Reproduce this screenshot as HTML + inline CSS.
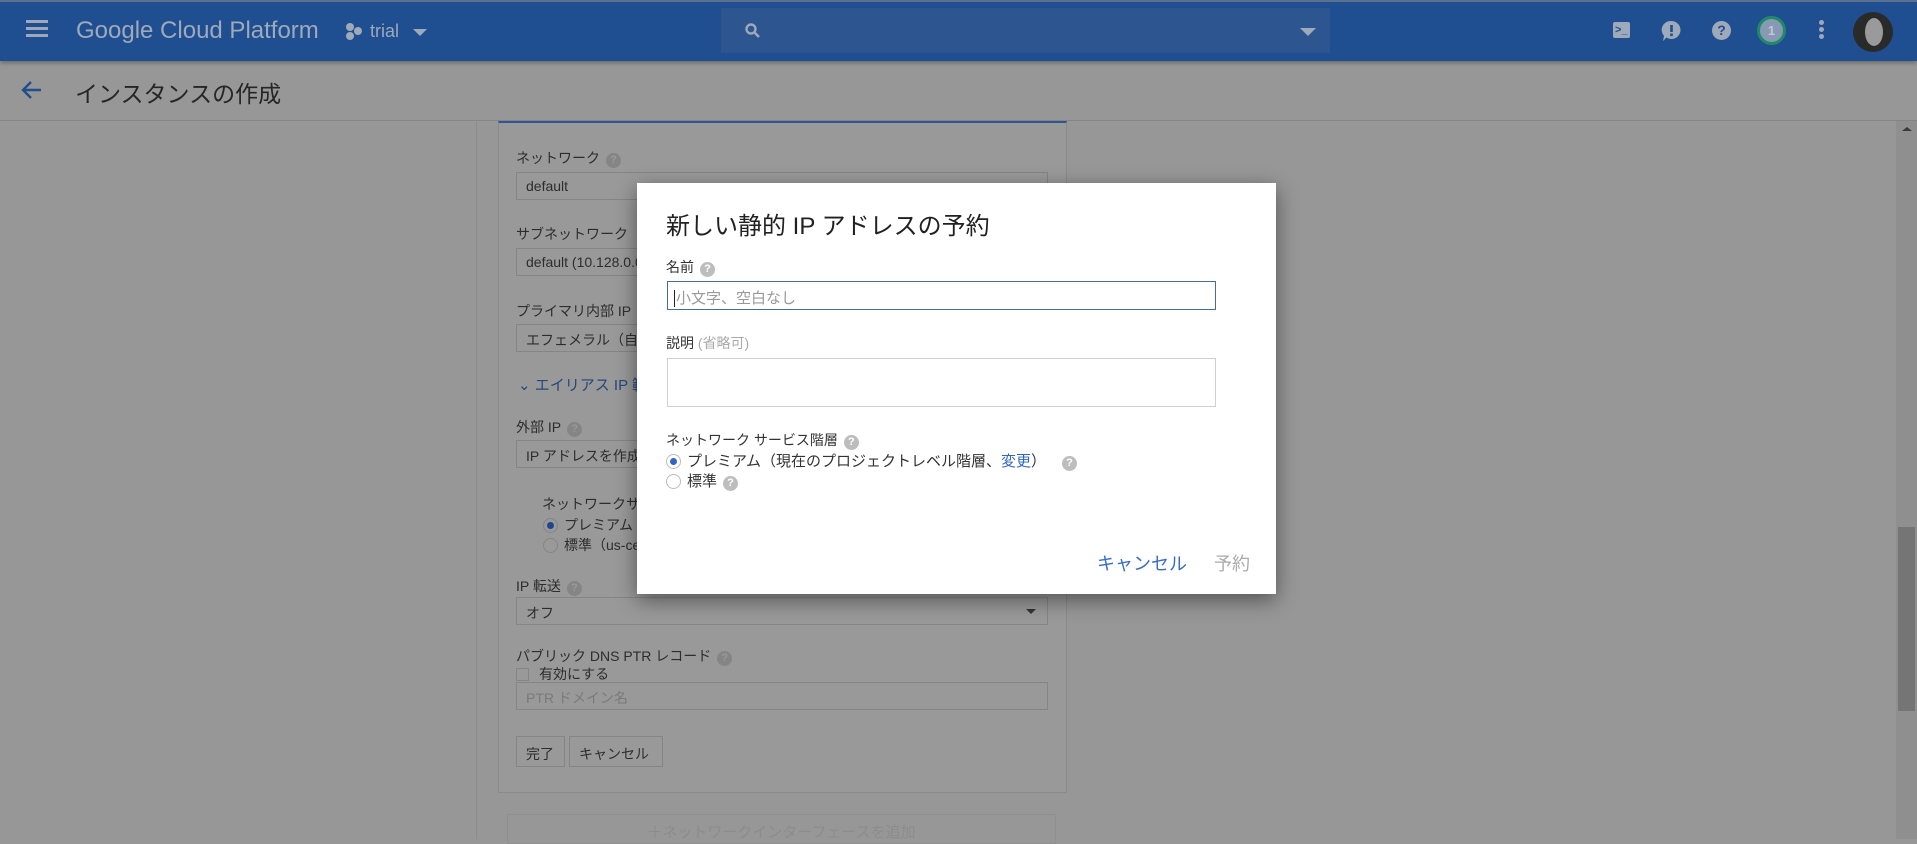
<!DOCTYPE html>
<html><head><meta charset="utf-8">
<style>
*{box-sizing:border-box;margin:0;padding:0}
body{width:1917px;height:839px;overflow:hidden;background:#979797;font-family:"Liberation Sans","Noto Sans CJK JP",sans-serif;position:relative;color:#2b2b2b}
.a{position:absolute}
.hdr{left:0;top:0;width:1917px;height:61px;background:#204f91;border-top:2px solid #5b6f8f;box-shadow:0 2px 4px rgba(0,0,0,.3)}
.sub{left:0;top:61px;width:1917px;height:60px;border-bottom:1px solid #858585}
.lbl{font-size:14px;color:#2d2d2d}
.inp{border:1px solid #858585;height:28px;font-size:14px;padding:5px 9px;color:#2d2d2d;background:#999}
.q{display:inline-block;width:15px;height:15px;border-radius:50%;background:#858585;color:#999;font-size:11px;font-weight:bold;text-align:center;line-height:15px;vertical-align:0px;margin-left:6px}
.mq{background:#bdbdbd;color:#fff}
.radio{display:inline-block;width:15px;height:15px;border-radius:50%;border:1px solid #858585;vertical-align:-3px;margin-right:6px;position:relative}
.radio.on::after{content:"";position:absolute;left:3px;top:3px;width:7px;height:7px;border-radius:50%;background:#1f468a}
.modal{left:637px;top:183px;width:639px;height:411px;background:#fff;box-shadow:0 6px 20px rgba(0,0,0,.45)}
.m .lbl{color:#333;font-size:14px}
.modal .radio.on::after{background:#3266c2}
</style></head><body>
<div class="a hdr">
 <div class="a" style="left:26px;top:18px;width:22px;height:3px;background:#9da8b8;box-shadow:0 7px 0 #9da8b8,0 14px 0 #9da8b8"></div>
 <div class="a" style="left:76px;top:15px;font-size:24px;color:#9ea9b9">Google Cloud Platform</div>
 <div class="a" style="left:346px;top:21px;width:8px;height:8px;border-radius:50%;background:#9ea9b9;box-shadow:0 9px 0 #9ea9b9,8px 4px 0 #9ea9b9"></div>
 <div class="a" style="left:370px;top:19px;font-size:18px;color:#9ea9b9">trial</div>
 <div class="a" style="left:413px;top:27px;border-left:7px solid transparent;border-right:7px solid transparent;border-top:7px solid #9ea9b9"></div>
 <div class="a" style="left:721px;top:6px;width:609px;height:45px;background:#2d558f"></div>
 <svg class="a" style="left:744px;top:20px" width="18" height="18" viewBox="0 0 18 18"><circle cx="7" cy="7" r="4.5" fill="none" stroke="#9ea9b9" stroke-width="2.4"/><path d="M10 10l5 5" stroke="#9ea9b9" stroke-width="2.6"/></svg>
 <div class="a" style="left:1300px;top:26px;border-left:8px solid transparent;border-right:8px solid transparent;border-top:8px solid #9ea9b9"></div>
 <div class="a" style="left:1613px;top:20px;width:17px;height:16px;background:#9ea9b9;border-radius:2px;color:#204f91;font-size:11px;font-weight:bold;line-height:16px;padding-left:2px">&gt;_</div>
 <svg class="a" style="left:1661px;top:18px" width="21" height="22" viewBox="0 0 21 22"><path d="M10.5 1a9 9 0 1 1-5 16.5L2 21l1-5A9 9 0 0 1 10.5 1z" fill="#9ea9b9"/><rect x="9.2" y="5" width="2.6" height="7" fill="#204f91"/><rect x="9.2" y="13.5" width="2.6" height="2.6" fill="#204f91"/></svg>
 <div class="a" style="left:1712px;top:19px;width:19px;height:19px;border-radius:50%;background:#9ea9b9;color:#204f91;font-weight:bold;font-size:14px;text-align:center;line-height:19px">?</div>
 <div class="a" style="left:1757px;top:14px;width:29px;height:29px;border-radius:50%;background:#8899b4;border:3px solid #1f8a68;color:#c0c8d4;font-weight:bold;font-size:13px;text-align:center;line-height:23px">1</div>
 <div class="a" style="left:1819px;top:18px;width:5px;height:5px;border-radius:50%;background:#9ea9b9;box-shadow:0 7px 0 #9ea9b9,0 14px 0 #9ea9b9"></div>
 <div class="a" style="left:1853px;top:10px;width:40px;height:40px;border-radius:50%;background:#2a2a2a;overflow:hidden"><div class="a" style="left:12px;top:6px;width:18px;height:28px;border-radius:50%;background:#9a9a9a"></div></div>
</div>
<div class="a sub">
 <svg class="a" style="left:21px;top:18px" width="22" height="22" viewBox="0 0 22 22"><path d="M20 11H3M10 3l-8 8 8 8" fill="none" stroke="#224e8c" stroke-width="2.4"/></svg>
 <div class="a" style="left:75px;top:14px;font-size:23px;color:#262626">インスタンスの作成</div>
</div>
<div class="a" style="left:476px;top:122px;width:1px;height:717px;background:#8c8c8c"></div>
<div class="a" style="left:498px;top:121px;width:569px;height:672px;border:1px solid #8a8a8a;border-top:2px solid #2d5595;background:#999"></div>
<div class="a lbl" style="left:516px;top:148px">ネットワーク<span class="q">?</span></div>
<div class="a inp" style="left:516px;top:172px;width:532px">default</div>
<div class="a lbl" style="left:516px;top:224px">サブネットワーク</div>
<div class="a inp" style="left:516px;top:248px;width:532px">default (10.128.0.0/20)</div>
<div class="a lbl" style="left:516px;top:301px">プライマリ内部 IP</div>
<div class="a inp" style="left:516px;top:324px;width:532px">エフェメラル（自動）</div>
<div class="a lbl" style="left:518px;top:374px;color:#26467c;font-size:15px">⌄ エイリアス IP 範囲</div>
<div class="a lbl" style="left:516px;top:417px">外部 IP<span class="q">?</span></div>
<div class="a inp" style="left:516px;top:440px;width:532px">IP アドレスを作成</div>
<div class="a lbl" style="left:542px;top:494px">ネットワークサービス階層</div>
<div class="a lbl" style="left:543px;top:515px"><span class="radio on"></span>プレミアム</div>
<div class="a lbl" style="left:543px;top:535px"><span class="radio"></span>標準（us-central1）</div>
<div class="a lbl" style="left:516px;top:576px">IP 転送<span class="q">?</span></div>
<div class="a inp" style="left:516px;top:597px;width:532px">オフ</div>
<div class="a" style="left:1026px;top:609px;border-left:5px solid transparent;border-right:5px solid transparent;border-top:5px solid #333"></div>
<div class="a lbl" style="left:516px;top:646px">パブリック DNS PTR レコード<span class="q">?</span></div>
<div class="a lbl" style="left:516px;top:664px"><span style="display:inline-block;width:13px;height:13px;border:1px solid #858585;vertical-align:-2px;margin-right:10px"></span>有効にする</div>
<div class="a inp" style="left:516px;top:682px;width:532px;color:#7a7a7a">PTR ドメイン名</div>
<div class="a inp" style="left:516px;top:736px;width:49px;height:31px;padding-top:7px">完了</div>
<div class="a inp" style="left:569px;top:736px;width:94px;height:31px;padding-top:7px">キャンセル</div>
<div class="a" style="left:507px;top:814px;width:549px;height:30px;border:1px solid #8f8f8f;color:#8c8c8c;font-size:15px;text-align:center;padding-top:6px">＋ネットワークインターフェースを追加</div>
<div class="a" style="left:1896px;top:121px;width:21px;height:718px;background:#8f8f8f"></div>
<div class="a" style="left:1902px;top:127px;border-left:5px solid transparent;border-right:5px solid transparent;border-bottom:4px solid #3a3a3a"></div>
<div class="a" style="left:1898px;top:527px;width:17px;height:184px;background:#757575"></div>
<div class="a modal m">
 <div class="a" style="left:29px;top:23px;font-size:24px;color:#212121">新しい静的 IP アドレスの予約</div>
 <div class="a lbl" style="left:29px;top:74px">名前<span class="q mq">?</span></div>
 <div class="a" style="left:30px;top:98px;width:549px;height:29px;border:1px solid #4a6a9a;font-size:15px;color:#999;padding:5px 6px"><span style="border-left:1px solid #222;padding-left:1px">小文字、空白なし</span></div>
 <div class="a lbl" style="left:29px;top:150px">説明 <span style="color:#aaa">(省略可)</span></div>
 <div class="a" style="left:30px;top:175px;width:549px;height:49px;border:1px solid #d0d0d0"></div>
 <div class="a lbl" style="left:29px;top:247px">ネットワーク サービス階層<span class="q mq">?</span></div>
 <div class="a lbl" style="left:29px;top:267px;font-size:15px"><span class="radio on" style="border-color:#bbb"></span>プレミアム（現在のプロジェクトレベル階層、<span style="color:#3266c2">変更</span>）<span class="q mq" style="margin-left:16px">?</span></div>
 <div class="a lbl" style="left:29px;top:287px;font-size:15px"><span class="radio" style="border-color:#bbb"></span>標準<span class="q mq">?</span></div>
 <div class="a" style="left:460px;top:367px;font-size:18px;color:#3a6cc4">キャンセル</div>
 <div class="a" style="left:577px;top:367px;font-size:18px;color:#aaa">予約</div>
</div>
</body></html>
